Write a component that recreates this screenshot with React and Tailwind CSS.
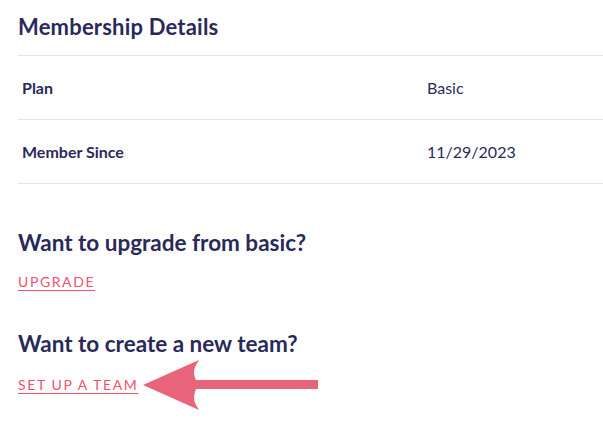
export default function App() {
  const rows = [
    { label: "Plan", value: "Basic" },
    { label: "Member Since", value: "11/29/2023" },
  ];

  return (
    <div className="w-[603px] h-[423px] bg-white pl-[18px] pt-[14px] text-[#2a2a5a] font-['Lato',_'Liberation_Sans',_sans-serif] overflow-hidden">
      <h2 className="text-[22px] font-bold leading-[26px] tracking-[0.2px]">Membership Details</h2>

      <div className="mt-[15px] border-t border-[#e4e3ec]">
        {rows.map((r) => (
          <div key={r.label} className="flex items-center h-[64px] border-b border-[#e4e3ec]">
            <div className="w-[409px] pl-[4px] text-[16px] font-bold">{r.label}</div>
            <div className="text-[16px]">{r.value}</div>
          </div>
        ))}
      </div>

      <h3 className="mt-[45px] text-[22.5px] font-bold leading-[28px]">Want to upgrade from basic?</h3>
      <a href="#" className="inline-block mt-[17px] text-[14px] leading-[16px] tracking-[1.6px] text-[#f2506e] underline underline-offset-[3px]">
        UPGRADE
      </a>

      <h3 className="mt-[37px] text-[22.5px] font-bold leading-[28px]">Want to create a new team?</h3>
      <div className="flex items-center mt-[19px]">
        <a href="#" className="text-[14px] leading-[16px] tracking-[1.6px] text-[#f2506e] underline underline-offset-[3px]">
          SET UP A TEAM
        </a>
        <svg width="178" height="52" viewBox="0 0 178 52" className="ml-[5px] -my-[18px]">
          <path
            d="M0 26 L56 1 C50 10 50 14 53 21 L175 21 L175 30 L53 30 C50 38 50 42 56 51 Z"
            fill="#e8647a"
          />
        </svg>
      </div>
    </div>
  );
}
